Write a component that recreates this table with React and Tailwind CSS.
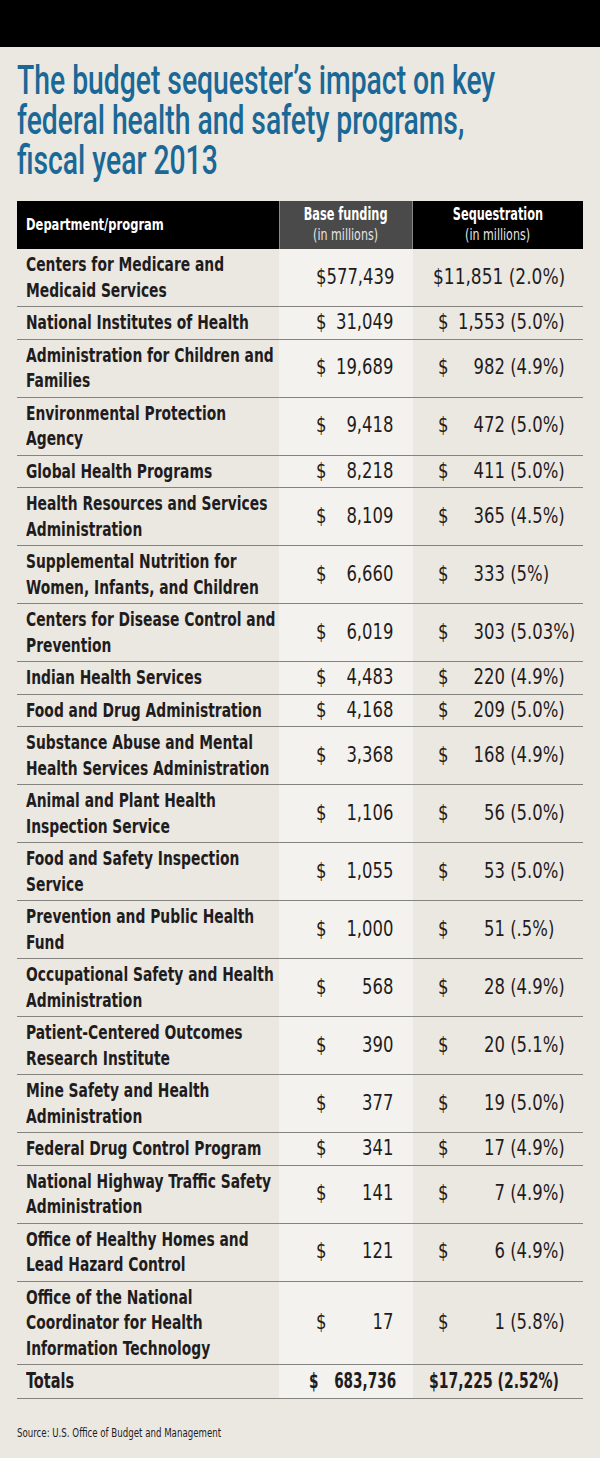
const ROWS = [
  { label: ['Centers for Medicare and', 'Medicaid Services'], base: '577,439', seq: '11,851', pct: '(2.0%)', tight: true },
  { label: ['National Institutes of Health'], base: '31,049', seq: '1,553', pct: '(5.0%)' },
  { label: ['Administration for Children and', 'Families'], base: '19,689', seq: '982', pct: '(4.9%)' },
  { label: ['Environmental Protection', 'Agency'], base: '9,418', seq: '472', pct: '(5.0%)' },
  { label: ['Global Health Programs'], base: '8,218', seq: '411', pct: '(5.0%)' },
  { label: ['Health Resources and Services', 'Administration'], base: '8,109', seq: '365', pct: '(4.5%)' },
  { label: ['Supplemental Nutrition for', 'Women, Infants, and Children'], base: '6,660', seq: '333', pct: '(5%)' },
  { label: ['Centers for Disease Control and', 'Prevention'], base: '6,019', seq: '303', pct: '(5.03%)' },
  { label: ['Indian Health Services'], base: '4,483', seq: '220', pct: '(4.9%)' },
  { label: ['Food and Drug Administration'], base: '4,168', seq: '209', pct: '(5.0%)' },
  { label: ['Substance Abuse and Mental', 'Health Services Administration'], base: '3,368', seq: '168', pct: '(4.9%)' },
  { label: ['Animal and Plant Health', 'Inspection Service'], base: '1,106', seq: '56', pct: '(5.0%)' },
  { label: ['Food and Safety Inspection', 'Service'], base: '1,055', seq: '53', pct: '(5.0%)' },
  { label: ['Prevention and Public Health', 'Fund'], base: '1,000', seq: '51', pct: '(.5%)' },
  { label: ['Occupational Safety and Health', 'Administration'], base: '568', seq: '28', pct: '(4.9%)' },
  { label: ['Patient-Centered Outcomes', 'Research Institute'], base: '390', seq: '20', pct: '(5.1%)' },
  { label: ['Mine Safety and Health', 'Administration'], base: '377', seq: '19', pct: '(5.0%)' },
  { label: ['Federal Drug Control Program'], base: '341', seq: '17', pct: '(4.9%)' },
  { label: ['National Highway Traffic Safety', 'Administration'], base: '141', seq: '7', pct: '(4.9%)' },
  { label: ['Office of Healthy Homes and', 'Lead Hazard Control'], base: '121', seq: '6', pct: '(4.9%)' },
  { label: ['Office of the National', 'Coordinator for Health', 'Information Technology'], base: '17', seq: '1', pct: '(5.8%)' },
]

// the reference uses a condensed face; the installed fonts are wider, so glyphs get squeezed
function Row({ row }) {
  return (
    <div className="grid grid-cols-[262px_134px_170px] border-b border-[#85837f]">
      <div className="pl-[9px] py-[3px] font-bold text-[20px] leading-[25.5px] text-[#1f1c1d] whitespace-nowrap">
        {row.label.map((l) => <div key={l} className="origin-left scale-x-[0.77]">{l}</div>)}
      </div>
      <div className="bg-[#f4f2ee] flex items-center text-[21px] text-[#1f1c1d] whitespace-nowrap">
        {row.tight ? (
          <div className="shrink-0 ml-[37px] w-[89px] text-right origin-left scale-x-[0.87]">${row.base}</div>
        ) : (
          <div className="shrink-0 ml-[37px] w-[89px] flex justify-between origin-left scale-x-[0.87]"><span>$</span><span>{row.base}</span></div>
        )}
      </div>
      <div className="flex items-center text-[21px] text-[#1f1c1d] whitespace-nowrap">
        {row.tight ? (
          <div className="shrink-0 ml-[20px] origin-left scale-x-[0.9]">${row.seq} {row.pct}</div>
        ) : (
          <div className="shrink-0 ml-[25px] flex origin-left scale-x-[0.87]">
            <div className="flex w-[77px] justify-between"><span>$</span><span>{row.seq}</span></div>
            <span className="ml-[6px]">{row.pct}</span>
          </div>
        )}
      </div>
    </div>
  )
}

export default function App() {
  return (
    <div className="min-h-screen overflow-x-hidden bg-[#ebe7e1] font-['Liberation_Sans_Narrow','DejaVu_Sans_Condensed','Liberation_Sans',sans-serif]">
      <div className="h-[47px] bg-black" />
      <div className="px-[17px]">
        <h1 className="mt-[13px] font-['Roboto',sans-serif] font-medium text-[41px] leading-[40px] text-[#1a6896] whitespace-nowrap">
          <div className="origin-left scale-x-[0.69]">The budget sequester’s impact on key</div>
          <div className="origin-left scale-x-[0.69]">federal health and safety programs,</div>
          <div className="origin-left scale-x-[0.69]">fiscal year 2013</div>
        </h1>

        <div className="mt-[21px] w-[566px]">
          {/* header */}
          <div className="grid grid-cols-[262px_134px_170px] h-[48px] text-white whitespace-nowrap">
            <div className="bg-black pl-[9px] flex items-center font-bold text-[16px]">
              <div className="origin-left scale-x-[0.8]">Department/program</div>
            </div>
            <div className="bg-[#4a4a4a] border-x border-[#8a8a8a] flex flex-col items-center justify-center leading-[21px]">
              <div className="font-bold text-[17px] scale-x-[0.74]">Base funding</div>
              <div className="text-[15px] text-[#e6e6e6] scale-x-[0.82]">(in millions)</div>
            </div>
            <div className="bg-black flex flex-col items-center justify-center leading-[21px]">
              <div className="font-bold text-[17px] scale-x-[0.74]">Sequestration</div>
              <div className="text-[15px] text-[#e6e6e6] scale-x-[0.82]">(in millions)</div>
            </div>
          </div>

          {ROWS.map((r) => <Row key={r.label.join(' ')} row={r} />)}

          {/* totals */}
          <div className="grid grid-cols-[262px_134px_170px] h-[34px] border-b border-[#85837f] font-bold text-[21px] text-[#1f1c1d] whitespace-nowrap">
            <div className="pl-[9px] flex items-center">
              <div className="origin-left scale-x-[0.77]">Totals</div>
            </div>
            <div className="bg-[#f4f2ee] flex items-center">
              <div className="shrink-0 ml-[30px] w-[121px] flex justify-between origin-left scale-x-[0.72]">
                <span>$</span><span>683,736</span>
              </div>
            </div>
            <div className="flex items-center">
              <div className="shrink-0 ml-[16px] origin-left scale-x-[0.74]">$17,225 (2.52%)</div>
            </div>
          </div>
        </div>

        <p className="mt-[25px] text-[12px] text-[#1f1c1d] whitespace-nowrap origin-left scale-x-[0.8]">Source: U.S. Office of Budget and Management</p>
      </div>
    </div>
  )
}
